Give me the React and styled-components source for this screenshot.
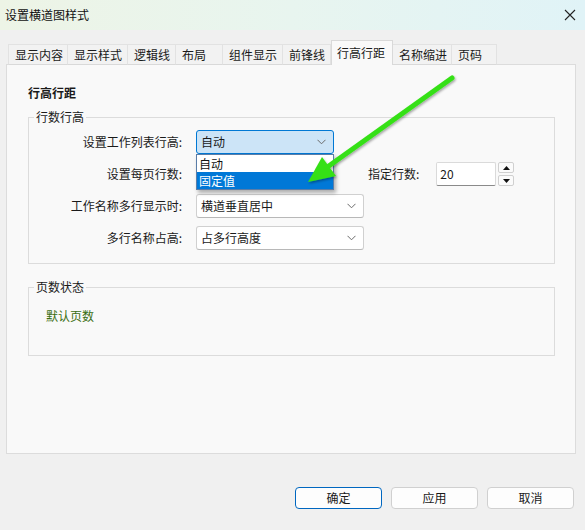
import React from "react";
import styled, { createGlobalStyle } from "styled-components";

const GlobalStyle = createGlobalStyle`
  html, body {
    margin: 0;
    padding: 0;
    background: #f0f0f0;
  }
  * {
    box-sizing: border-box;
  }
`;

const tabs = [
  { label: "显示内容", width: 60 },
  { label: "显示样式", width: 60 },
  { label: "逻辑线", width: 48 },
  { label: "布局", width: 47 },
  { label: "组件显示", width: 60 },
  { label: "前锋线", width: 48 },
  { label: "行高行距", width: 62, active: true },
  { label: "名称缩进", width: 59 },
  { label: "页码", width: 45 },
];

const Chevron = () => (
  <svg width="9" height="6" viewBox="0 0 9 6">
    <path d="M0.5 0.8 L4.5 4.8 L8.5 0.8" fill="none" stroke="#6b6b6b" strokeWidth="1" />
  </svg>
);

const Combo = ({ width, active, children }) => (
  <ComboBox $width={width} $active={active}>
    <span>{children}</span>
    <Chevron />
  </ComboBox>
);

const App = () => {
  return (
    <Window>
      <GlobalStyle />
      <TitleBar>
        <Title>设置横道图样式</Title>
        <CloseButton>
          <svg width="12" height="12" viewBox="0 0 12 12">
            <path d="M1 1 L11 11 M11 1 L1 11" stroke="#222" strokeWidth="1.1" />
          </svg>
        </CloseButton>
      </TitleBar>

      <Body>
        <TabStrip>
          {tabs.map((t) => (
            <Tab key={t.label} $width={t.width} $active={t.active}>
              {t.label}
            </Tab>
          ))}
        </TabStrip>

        <Panel>
          <Heading>行高行距</Heading>

          <Group>
            <Legend>行数行高</Legend>
            <FormGrid>
              <Label>设置工作列表行高:</Label>
              <Cell>
                <ComboWrap>
                  <Combo width={138} active>
                    自动
                  </Combo>
                  <DropList>
                    <DropItem>自动</DropItem>
                    <DropItem $selected>固定值</DropItem>
                  </DropList>
                </ComboWrap>
              </Cell>

              <Label>设置每页行数:</Label>
              <Cell>
                {/* combo for this row sits under the open list */}
                <Combo width={138} />
                <InlineLabel>指定行数:</InlineLabel>
                <NumberBox>20</NumberBox>
                <Spinner>
                  <SpinButton>
                    <svg width="7" height="4" viewBox="0 0 7 4">
                      <path d="M0 4 L3.5 0 L7 4 Z" fill="#111" />
                    </svg>
                  </SpinButton>
                  <SpinButton>
                    <svg width="7" height="4" viewBox="0 0 7 4">
                      <path d="M0 0 L3.5 4 L7 0 Z" fill="#111" />
                    </svg>
                  </SpinButton>
                </Spinner>
              </Cell>

              <Label>工作名称多行显示时:</Label>
              <Cell>
                <Combo width={168}>横道垂直居中</Combo>
              </Cell>

              <Label>多行名称占高:</Label>
              <Cell>
                <Combo width={168}>占多行高度</Combo>
              </Cell>
            </FormGrid>
          </Group>

          <Group $gap>
            <Legend>页数状态</Legend>
            <StatusText>默认页数</StatusText>
          </Group>
        </Panel>

        <Footer>
          <Button $primary>确定</Button>
          <Button>应用</Button>
          <Button>取消</Button>
        </Footer>
      </Body>

      <ArrowLayer width="585" height="530" viewBox="0 0 585 530">
        <defs>
          <filter id="arrowShadow" x="-20%" y="-20%" width="140%" height="140%">
            <feDropShadow dx="1" dy="1.5" stdDeviation="1" floodColor="#000" floodOpacity="0.35" />
          </filter>
        </defs>
        <g filter="url(#arrowShadow)">
          <line x1="452" y1="78" x2="326" y2="168" stroke="#36e016" strokeWidth="5" strokeLinecap="round" />
          <polygon points="308,182 322,157 336,176" fill="#36e016" />
        </g>
      </ArrowLayer>
    </Window>
  );
};

export default App;

const Window = styled.div`
  position: relative;
  width: 585px;
  height: 530px;
  background: #f0f0f0;
  font-family: "Noto Sans CJK SC", "Microsoft YaHei", sans-serif;
  font-size: 12px;
  color: #1a1a1a;
  overflow: hidden;
`;

const TitleBar = styled.div`
  height: 30px;
  display: flex;
  align-items: center;
  justify-content: space-between;
  padding: 0 4px 0 5px;
  background: linear-gradient(90deg, #edf4e6 0%, #e8f5ef 50%, #e0f3f7 100%);
`;

const Title = styled.div`
  font-size: 12px;
  line-height: 16px;
  color: #111;
`;

const CloseButton = styled.div`
  width: 22px;
  height: 22px;
  display: flex;
  align-items: center;
  justify-content: center;
`;

const Body = styled.div`
  padding: 0 9px 0 6px;
`;

const TabStrip = styled.div`
  display: flex;
  align-items: flex-end;
  height: 35px;
  padding-left: 2px;
  position: relative;
  z-index: 1;
  margin-bottom: -1px;
`;

const Tab = styled.div`
  width: ${(p) => p.$width}px;
  height: ${(p) => (p.$active ? 25 : 21)}px;
  display: flex;
  align-items: center;
  padding-left: ${(p) => (p.$active ? 5 : 6)}px;
  line-height: 16px;
  white-space: nowrap;
  border: 1px solid ${(p) => (p.$active ? "#d9d9d9" : "#e2e2e2")};
  border-bottom: ${(p) => (p.$active ? "none" : "1px solid #d9d9d9")};
  border-left: ${(p) => (p.$active ? "1px solid #d9d9d9" : "none")};
  background: ${(p) => (p.$active ? "#f9f9f9" : "#f2f2f2")};
  padding-top: ${(p) => (p.$active ? "0" : "1px")};

  &:first-child {
    border-left: 1px solid #e2e2e2;
  }
`;

const Panel = styled.div`
  height: 390px;
  background: #f9f9f9;
  border: 1px solid #dcdcdc;
  padding: 20px 20px 0 21px;
`;

const Heading = styled.div`
  font-weight: bold;
  line-height: 16px;
  height: 16px;
  margin-bottom: 8px;
`;

const Group = styled.fieldset`
  margin: ${(p) => (p.$gap ? "15px" : "0")} 0 0 0;
  padding: 5px 5px ${(p) => (p.$gap ? "31px" : "13px")} 5px;
  border: 1px solid #dcdcdc;
  min-width: 0;
`;

const Legend = styled.legend`
  padding: 0 2px;
  line-height: 16px;
  color: #1a1a1a;
`;

const FormGrid = styled.div`
  display: grid;
  grid-template-columns: 148px 1fr;
  column-gap: 14px;
  row-gap: 8px;
  align-items: center;
`;

const Label = styled.div`
  text-align: right;
  line-height: 16px;
  white-space: nowrap;
`;

const Cell = styled.div`
  display: flex;
  align-items: center;
  height: 24px;
`;

const ComboWrap = styled.div`
  position: relative;
`;

const ComboBox = styled.div`
  width: ${(p) => p.$width}px;
  height: 24px;
  display: flex;
  align-items: center;
  justify-content: space-between;
  padding: 0 7px 0 4px;
  line-height: 16px;
  border: 1px solid ${(p) => (p.$active ? "#0078d4" : "#d0d0d0")};
  border-bottom-color: ${(p) => (p.$active ? "#0078d4" : "#b8b8b8")};
  border-radius: 3px;
  background: ${(p) => (p.$active ? "#cce4f7" : "#ffffff")};
`;

const DropList = styled.div`
  position: absolute;
  left: 0;
  top: 24px;
  width: 138px;
  background: #fff;
  border: 1px solid #5a7da8;
  box-shadow: 2px 3px 4px rgba(0, 0, 0, 0.3);
  z-index: 5;
`;

const DropItem = styled.div`
  height: 17px;
  line-height: 17px;
  padding-left: 2px;
  background: ${(p) => (p.$selected ? "#0078d7" : "#fff")};
  color: ${(p) => (p.$selected ? "#fff" : "#111")};
`;

const InlineLabel = styled.div`
  margin-left: 34px;
  line-height: 16px;
  white-space: nowrap;
`;

const NumberBox = styled.div`
  margin-left: 17px;
  width: 60px;
  height: 24px;
  display: flex;
  align-items: center;
  padding-left: 3px;
  background: #fff;
  border: 1px solid #dadada;
  border-bottom-color: #8a8a8a;
  border-radius: 2px;
  line-height: 16px;
`;

const Spinner = styled.div`
  margin-left: 2px;
  display: flex;
  flex-direction: column;
  gap: 2px;
`;

const SpinButton = styled.div`
  width: 16px;
  height: 11px;
  display: flex;
  align-items: center;
  justify-content: center;
  background: #fbfbfb;
  border: 1px solid #d0d0d0;
  border-radius: 2px;
`;

const StatusText = styled.div`
  margin-left: 12px;
  margin-top: 8px;
  line-height: 16px;
  color: #3a6e12;
`;

const Footer = styled.div`
  display: flex;
  justify-content: flex-end;
  gap: 9px;
  margin-top: 33px;
  padding-right: 2px;
`;

const Button = styled.div`
  width: 87px;
  height: 22px;
  display: flex;
  align-items: center;
  justify-content: center;
  line-height: 16px;
  background: #fdfdfd;
  border: 1px solid ${(p) => (p.$primary ? "#0067c0" : "#d0d0d0")};
  border-radius: 4px;
`;

const ArrowLayer = styled.svg`
  position: absolute;
  left: 0;
  top: 0;
  pointer-events: none;
  z-index: 10;
`;
